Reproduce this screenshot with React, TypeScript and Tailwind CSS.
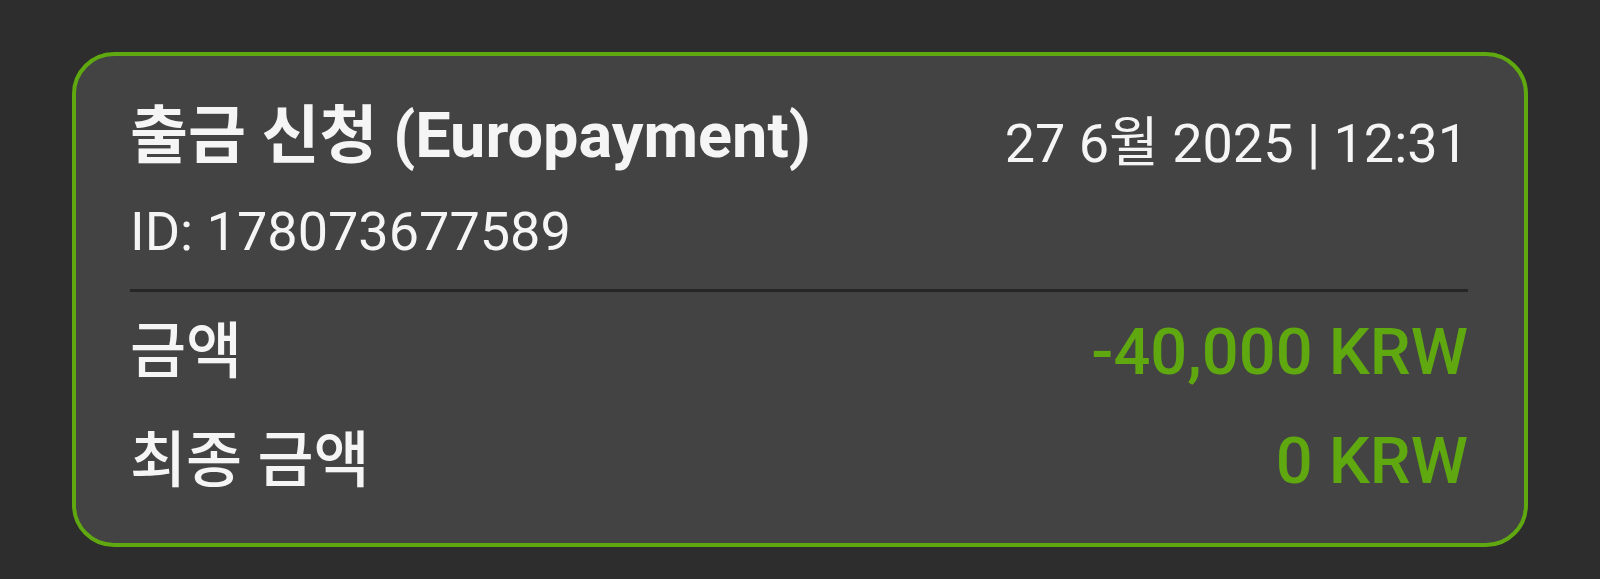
export default function App() {
  return (
    <div
      className="min-h-[579px] w-full bg-[#2d2d2d] pt-[52px] pl-[72px] pr-[72px]"
      style={{ fontFamily: 'Roboto, "Noto Sans CJK KR", sans-serif' }}
    >
      {/* Transaction card */}
      <div className="h-[495px] w-[1456px] rounded-[42px] border-4 border-[#5fa80f] bg-[#434343] pl-[54px] pr-[56px] pt-[48px]">
        {/* Header */}
        <div className="flex items-start justify-between">
          <h2 className="text-[63px] font-bold leading-none text-[#f5f5f5]">
            출금 신청 (Europayment)
          </h2>
          <p className="mt-[13px] text-[54px] leading-none text-[#f5f5f5]">
            27 6월 2025 | 12:31
          </p>
        </div>
        <p className="mt-[34px] text-[54px] leading-none text-[#f5f5f5]">
          ID: 178073677589
        </p>

        <div className="mt-[30px] h-[3px] w-full bg-[#262626]" />

        {/* Amounts */}
        <div className="mt-[28px] flex items-center justify-between">
          <span className="text-[61px] font-medium leading-none text-[#f5f5f5]">금액</span>
          <span className="text-[65px] font-medium leading-none text-[#5fa80f]">-40,000 KRW</span>
        </div>
        <div className="mt-[44px] flex items-center justify-between">
          <span className="text-[61px] font-medium leading-none text-[#f5f5f5]">최종 금액</span>
          <span className="text-[65px] font-medium leading-none text-[#5fa80f]">0 KRW</span>
        </div>
      </div>
    </div>
  );
}
